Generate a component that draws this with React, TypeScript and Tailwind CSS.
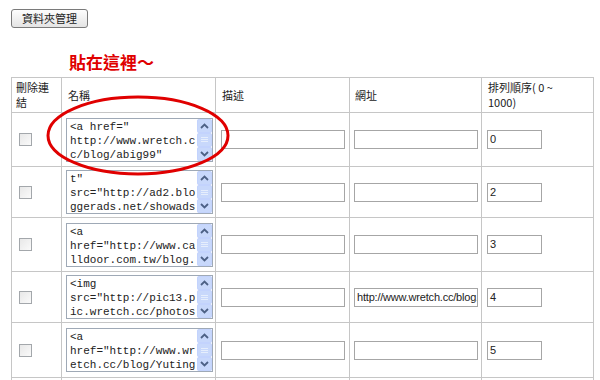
import React from 'react'

const rows = [
  { lines: ['<a href="', 'http://www.wretch.c', 'c/blog/abig99"'], url: '', order: '0', h: 'h-[54px]' },
  { lines: ['t"', 'src="http://ad2.blo', 'ggerads.net/showads'], url: '', order: '2', h: 'h-[51px]' },
  { lines: ['<a', 'href="http://www.ca', 'lldoor.com.tw/blog.'], url: '', order: '3', h: 'h-[54px]' },
  { lines: ['<img', 'src="http://pic13.p', 'ic.wretch.cc/photos'], url: 'http://www.wretch.cc/blog.', order: '4', h: 'h-[51px]' },
  { lines: ['<a', 'href="http://www.wr', 'etch.cc/blog/Yuting'], url: '', order: '5', h: 'h-[55px]' },
]

function Chevron({ up }: { up?: boolean }) {
  return (
    <svg width="9" height="6" viewBox="0 0 9 6">
      <path
        d={up ? 'M1 5 L4.5 1.5 L8 5' : 'M1 1 L4.5 4.5 L8 1'}
        fill="none"
        stroke="#4d6185"
        strokeWidth="1.8"
      />
    </svg>
  )
}

function FakeTextarea({ lines }: { lines: string[] }) {
  return (
    <div className="flex h-[44px] w-[147px] border border-[#9fa9b6] bg-white">
      <div className="flex-1 overflow-hidden whitespace-pre pl-[3px] pt-[1px] font-['Liberation_Mono',monospace] text-[11px] leading-[14px] text-[#222]">
        {lines.map((l, i) => (
          <div key={i}>{l}</div>
        ))}
      </div>
      <div className="flex w-[15px] flex-col bg-[#f3f6fd]">
        <div className="flex h-[14px] items-center justify-center rounded-[2px] border border-[#c3d3fd] bg-[#c8d8fb]">
          <Chevron up />
        </div>
        <div className="flex flex-1 flex-col items-center justify-center gap-[1px] rounded-[2px] border border-[#c3d3fd] bg-[#c8d8fb]">
          <div className="h-px w-[7px] bg-[#e6eefc]" />
          <div className="h-px w-[7px] bg-[#e6eefc]" />
          <div className="h-px w-[7px] bg-[#e6eefc]" />
        </div>
        <div className="flex h-[14px] items-center justify-center rounded-[2px] border border-[#c3d3fd] bg-[#c8d8fb]">
          <Chevron />
        </div>
      </div>
    </div>
  )
}

// plain text field look, value is clipped like a real input
function TextBox({ value, w }: { value: string; w: string }) {
  return (
    <div
      className={`${w} flex h-[19px] items-center overflow-hidden whitespace-nowrap border border-[#a6a6a6] bg-white pl-[2px] font-['Liberation_Sans',sans-serif] text-[11px] tracking-[-0.2px] text-[#222]`}
    >
      {value}
    </div>
  )
}

const cell = 'border border-[#c6c6c6] align-middle py-0 pr-0'

export default function App() {
  return (
    <div className="relative h-[380px] w-[600px] overflow-hidden bg-white font-['Noto_Sans_CJK_TC','Liberation_Sans',sans-serif] text-[#222]">
      <div className="pl-[11px] pt-[9px]">
        <button className="flex h-[19px] w-[77px] items-center justify-center rounded-[3px] border border-[#7a7a7a] bg-gradient-to-b from-[#fdfdfd] to-[#e4e4e4] text-[11px] leading-none text-[#222]">
          資料夾管理
        </button>
      </div>
      <div className="pl-[69px] pt-[25px] font-['Liberation_Serif','Noto_Sans_CJK_TC',serif] text-[17px] font-bold leading-[22px] text-[#e00000]">
        貼在這裡～
      </div>
      <table className="ml-[11px] mt-[2px] border-collapse text-[11px] leading-[15px]">
        <tbody>
          <tr className="h-[35px]">
            <td className={`${cell} w-[50px] pl-[4px]`}>
              刪除連<br />結
            </td>
            <td className={`${cell} w-[154px] pl-[6px]`}>名稱</td>
            <td className={`${cell} w-[134px] pl-[6px]`}>描述</td>
            <td className={`${cell} w-[132px] pl-[5px]`}>網址</td>
            <td className={`${cell} w-[112px] pl-[6px]`}>
              排列順序( 0 ~<br />1000)
            </td>
          </tr>
          {rows.map((r, i) => (
            <tr key={i} className={r.h}>
              <td className={`${cell} pl-[7px]`}>
                <div className="h-[13px] w-[13px] border border-[#a3a7ab] bg-gradient-to-br from-[#e8e8e8] to-[#fafafa]" />
              </td>
              <td className={`${cell} pl-[4px]`}>
                <FakeTextarea lines={r.lines} />
              </td>
              <td className={`${cell} pl-[5px]`}>
                <TextBox value="" w="w-[124px]" />
              </td>
              <td className={`${cell} pl-[4px]`}>
                <TextBox value={r.url} w="w-[124px]" />
              </td>
              <td className={`${cell} pl-[5px]`}>
                <TextBox value={r.order} w="w-[55px]" />
              </td>
            </tr>
          ))}
          <tr className="h-[30px]">
            <td className={cell} />
            <td className={cell} />
            <td className={cell} />
            <td className={cell} />
            <td className={cell} />
          </tr>
        </tbody>
      </table>
      <svg className="pointer-events-none absolute left-[45px] top-[94px]" width="186" height="83" viewBox="0 0 186 83">
        <ellipse cx="93" cy="41.5" rx="90" ry="38.5" fill="none" stroke="#e00000" strokeWidth="3" />
      </svg>
    </div>
  )
}
